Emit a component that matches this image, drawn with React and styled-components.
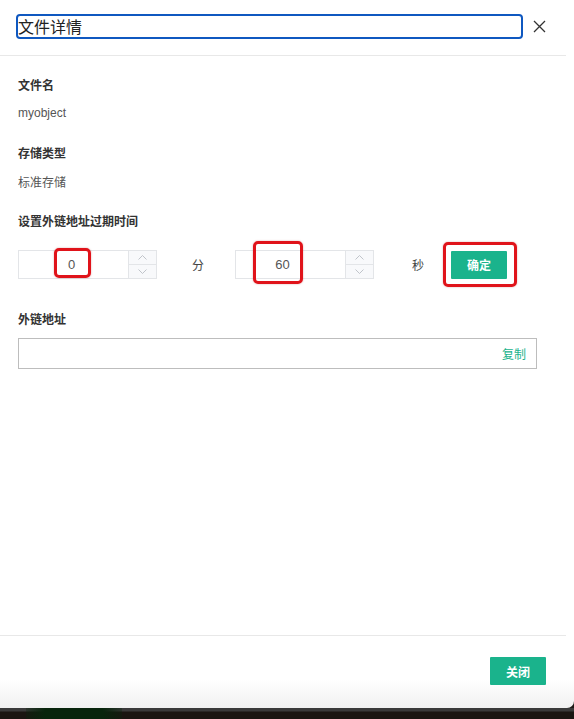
import React from 'react';
import styled, {createGlobalStyle} from 'styled-components';

// ========== Global ========== //
const GlobalStyle = createGlobalStyle`
	html, body {
		margin: 0;
		padding: 0;
		background-color: #1d1a16;
	}
	* {
		box-sizing: border-box;
	}
	body {
		font-family: "Liberation Sans", "Noto Sans CJK SC", sans-serif;
		color: #333;
	}
`;

// ========== Styled Components ========== //
const Page = styled.div`
	width: 574px;
	height: 719px;
	display: flex;
	flex-direction: column;
	overflow: hidden;
`;

const Modal = styled.div`
	width: 574px;
	height: 708px;
	background-color: white;
	border-radius: 0 0 7px 0;
	display: flex;
	flex-direction: column;
	padding-right: 8px;
	background-image: linear-gradient(to bottom, #fff 0, #fff 680px, #f1f1f1 708px);
`;

const Desktop = styled.div`
	flex: 1;
	background: linear-gradient(to bottom, #3a3a3a 0, #3a3a3a 3px, #1a1511 4px);
	display: flex;
	padding-left: 26px;
`;

const DesktopGlow = styled.div`
	width: 96px;
	height: 100%;
	background: linear-gradient(to right, rgba(8, 37, 12, 0.3), #08250c 20%, #08250c 80%, rgba(8, 37, 12, 0.3));
`;

const Header = styled.header`
	height: 56px;
	display: flex;
	align-items: flex-start;
	padding: 14px 0 0 16px;
	border-bottom: 1px solid #e8e8e8;
`;

const TitleInput = styled.input`
	width: 507px;
	height: 25px;
	margin: 0;
	padding: 0 0 1px 0;
	border: 2px solid #0f58c0;
	border-radius: 4px;
	outline: none;
	font-family: "Noto Sans CJK SC", sans-serif;
	font-size: 16px;
	color: #222;
	background: white;
`;

const CloseButton = styled.button`
	margin: 5px 0 0 9px;
	width: 14px;
	height: 14px;
	padding: 0;
	border: none;
	background: transparent;
	display: flex;
	align-items: center;
	justify-content: center;
	cursor: pointer;
`;

const Body = styled.section`
	flex: 1;
	padding: 20px 0 0 18px;
`;

const FieldLabel = styled.h4`
	margin: ${props => props.$top || 0}px 0 0 0;
	font-family: "Noto Sans CJK SC", sans-serif;
	font-size: 12px;
	line-height: 18px;
	font-weight: 700;
	color: #333;
`;

const FieldValue = styled.p`
	margin: ${props => props.$top || 10}px 0 0 0;
	font-family: "Liberation Sans", "Noto Sans CJK SC", sans-serif;
	font-size: 12px;
	line-height: 18px;
	color: #555;
`;

const ExpireRow = styled.div`
	margin-top: 20px;
	display: flex;
	align-items: center;
	height: 29px;
`;

const NumberBox = styled.div`
	position: relative;
	width: 139px;
	height: 29px;
	display: flex;
	border: 1px solid #e3e5e8;
	background-color: white;
`;

const NumberText = styled.div`
	flex: 1;
	display: flex;
	align-items: center;
	justify-content: center;
	padding-right: ${props => props.$pad || 0}px;
	font-family: "Liberation Sans", sans-serif;
	font-size: 13px;
	color: #555;
`;

const Spinner = styled.div`
	width: 28px;
	display: flex;
	flex-direction: column;
	border-left: 1px solid #e3e5e8;
	background-color: #f8f9fb;
`;

const SpinButton = styled.div`
	flex: 1;
	display: flex;
	align-items: center;
	justify-content: center;
	border-top: ${props => props.$down ? '1px solid #e3e5e8' : 'none'};
`;

const Unit = styled.span`
	margin: 0 ${props => props.$right}px 0 ${props => props.$left}px;
	font-family: "Noto Sans CJK SC", sans-serif;
	font-size: 12px;
	color: #444;
	white-space: nowrap;
`;

const ConfirmWrap = styled.div`
	position: relative;
`;

const PrimaryButton = styled.button`
	width: 56px;
	height: 28px;
	padding: 0;
	border: none;
	border-radius: 1px;
	background-color: #1ab38c;
	color: white;
	font-family: "Noto Sans CJK SC", sans-serif;
	font-size: 12px;
	font-weight: 700;
	cursor: pointer;
`;

const Mark = styled.span`
	position: absolute;
	left: ${props => props.$x}px;
	top: ${props => props.$y}px;
	width: ${props => props.$w}px;
	height: ${props => props.$h}px;
	border: 3px solid #e0131a;
	border-radius: 5px;
	box-shadow: 0 0 2px rgba(150, 0, 0, 0.35);
	pointer-events: none;
`;

const LinkBox = styled.div`
	margin-top: 10px;
	width: 519px;
	height: 31px;
	border: 1px solid #bdbdbd;
	display: flex;
	align-items: center;
	justify-content: flex-end;
	padding-right: 10px;
`;

const CopyLink = styled.a`
	font-family: "Noto Sans CJK SC", sans-serif;
	font-size: 12px;
	color: #1ab38c;
	cursor: pointer;
`;

const Footer = styled.footer`
	height: 73px;
	border-top: 1px solid #e8e8e8;
	display: flex;
	justify-content: flex-end;
	align-items: flex-start;
	padding: 21px 20px 0 0;
`;

// ========== Icons ========== //
const CloseIcon = () => (
	<svg width="13" height="13" viewBox="0 0 13 13">
		<path d="M1 1 L12 12 M12 1 L1 12" stroke="#333" strokeWidth="1.3" fill="none"/>
	</svg>
);

const Chevron = ({down}) => (
	<svg width="9" height="5" viewBox="0 0 9 5">
		<path d={down ? "M0.5 0.5 L4.5 4.5 L8.5 0.5" : "M0.5 4.5 L4.5 0.5 L8.5 4.5"} stroke="#b9bdc4" strokeWidth="0.9" fill="none"/>
	</svg>
);

const NumberInput = ({value, pad, mark}) => (
	<NumberBox>
		<NumberText $pad={pad}>{value}</NumberText>
		<Spinner>
			<SpinButton><Chevron/></SpinButton>
			<SpinButton $down><Chevron down/></SpinButton>
		</Spinner>
		{mark}
	</NumberBox>
);

// ========== React Function Component ========== //
const App = () => {
	return (
		<Page>
			<GlobalStyle/>
			<Modal>
				<Header>
					<TitleInput value="文件详情" readOnly/>
					<CloseButton><CloseIcon/></CloseButton>
				</Header>

				<Body>
					<FieldLabel>文件名</FieldLabel>
					<FieldValue>myobject</FieldValue>

					<FieldLabel $top={22}>存储类型</FieldLabel>
					<FieldValue $top={12}>标准存储</FieldValue>

					<FieldLabel $top={20}>设置外链地址过期时间</FieldLabel>
					<ExpireRow>
						<NumberInput value="0" pad={4} mark={<Mark $x={35} $y={-3} $w={37} $h={30}/>}/>
						<Unit $left={35} $right={31}>分</Unit>
						<NumberInput value="60" pad={16} mark={<Mark $x={17} $y={-10} $w={50} $h={43}/>}/>
						<Unit $left={38} $right={27}>秒</Unit>
						<ConfirmWrap>
							<PrimaryButton>确定</PrimaryButton>
							<Mark $x={-8} $y={-9} $w={74} $h={45}/>
						</ConfirmWrap>
					</ExpireRow>

					<FieldLabel $top={31}>外链地址</FieldLabel>
					<LinkBox>
						<CopyLink>复制</CopyLink>
					</LinkBox>
				</Body>

				<Footer>
					<PrimaryButton>关闭</PrimaryButton>
				</Footer>
			</Modal>
			<Desktop>
				<DesktopGlow/>
			</Desktop>
		</Page>
	);
}

export default App;
